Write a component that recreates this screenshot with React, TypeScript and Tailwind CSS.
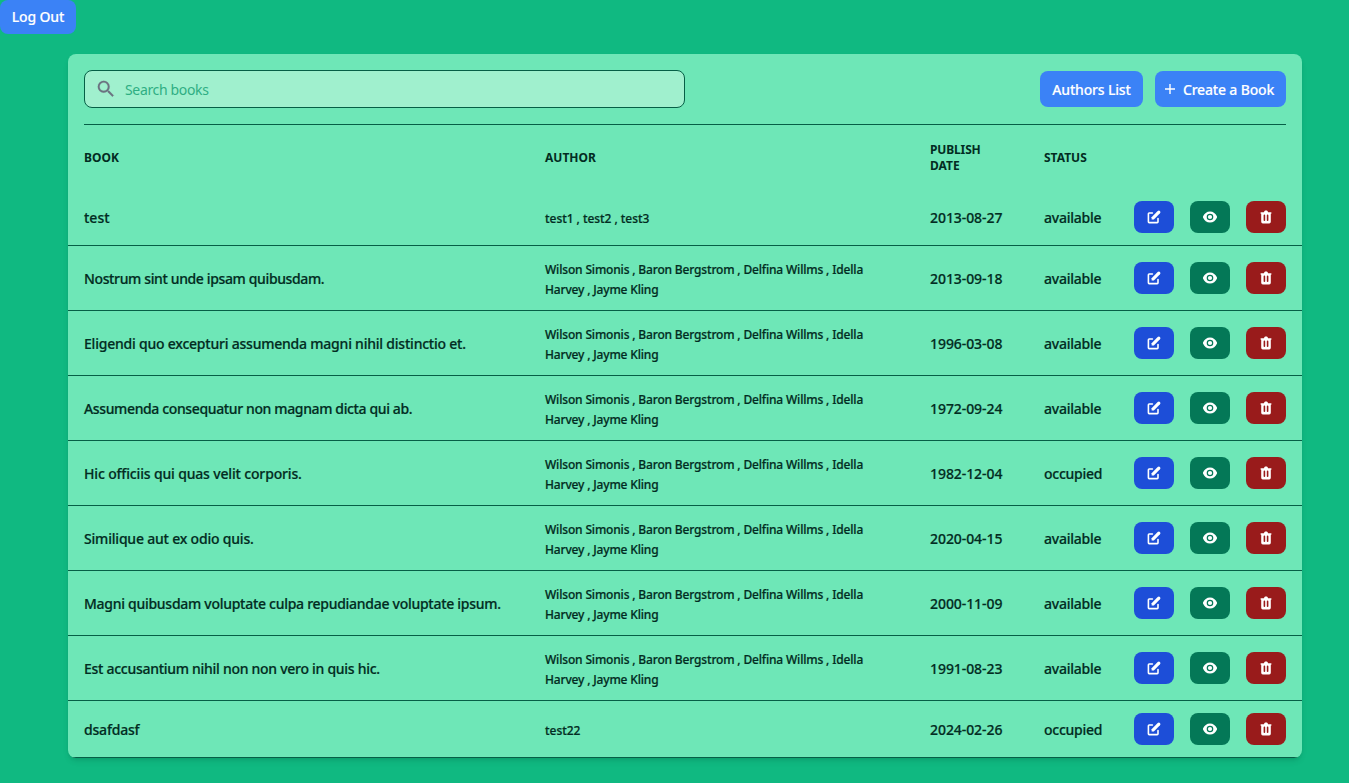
import { MdSearch } from "react-icons/md";
import { HiPencilAlt, HiTrash } from "react-icons/hi";

type Book = { title: string; tracking: string; authors: string; date: string; status: string };

const team = "Wilson Simonis , Baron Bergstrom , Delfina Willms , Idella Harvey , Jayme Kling";

const books: Book[] = [
  { title: "test", tracking: "tracking-normal", authors: "test1 , test2 , test3", date: "2013-08-27", status: "available" },
  { title: "Nostrum sint unde ipsam quibusdam.", tracking: "tracking-[-0.37px]", authors: team, date: "2013-09-18", status: "available" },
  { title: "Eligendi quo excepturi assumenda magni nihil distinctio et.", tracking: "tracking-[-0.22px]", authors: team, date: "1996-03-08", status: "available" },
  { title: "Assumenda consequatur non magnam dicta qui ab.", tracking: "tracking-[-0.37px]", authors: team, date: "1972-09-24", status: "available" },
  { title: "Hic officiis qui quas velit corporis.", tracking: "tracking-[-0.16px]", authors: team, date: "1982-12-04", status: "occupied" },
  { title: "Similique aut ex odio quis.", tracking: "tracking-[-0.2px]", authors: team, date: "2020-04-15", status: "available" },
  { title: "Magni quibusdam voluptate culpa repudiandae voluptate ipsum.", tracking: "tracking-[-0.28px]", authors: team, date: "2000-11-09", status: "available" },
  { title: "Est accusantium nihil non non vero in quis hic.", tracking: "tracking-[-0.28px]", authors: team, date: "1991-08-23", status: "available" },
  { title: "dsafdasf", tracking: "tracking-[-0.2px]", authors: "test22", date: "2024-02-26", status: "occupied" },
];

const columns = "grid grid-cols-[461px_385px_114px_90px_152px] items-center px-4";
const action = "flex h-8 w-10 items-center justify-center rounded-lg text-white";
const primary = "flex h-9 items-center justify-center rounded-lg bg-[#3b82f6] pt-0.5 tracking-[-0.17px] text-white [-webkit-text-stroke:0.15px]";

function EyeIcon() {
  return (
    <svg viewBox="0 0 16 16" className="size-4 fill-current">
      <path
        fillRule="evenodd"
        d="M8 2.5c3.2 0 5.8 2 7 5.1v.8c-1.2 3.1-3.8 5.1-7 5.1s-5.8-2-7-5.1v-.8c1.2-3.1 3.8-5.1 7-5.1zM8 4.7a3.3 3.3 0 1 0 0 6.6 3.3 3.3 0 0 0 0-6.6z"
      />
      <circle cx="8" cy="8" r="2.1" />
    </svg>
  );
}

export default function App() {
  return (
    <div className="min-h-screen bg-[#10b981] font-['Noto_Sans',sans-serif] text-sm font-medium text-[#022c22]">
      <button className="flex h-[34px] w-19 items-center justify-center rounded-lg bg-[#3b82f6] tracking-[-0.15px] text-white [-webkit-text-stroke:0.15px]">Log Out</button>
      <main className="ml-[68px] mt-5 w-[1234px] overflow-hidden rounded-lg bg-[#6ee7b7] shadow-md">
        <div className="mx-4 flex h-[71px] items-center justify-between border-b border-[#065f46]">
          <label className="flex h-[38px] w-[601px] items-center gap-2 rounded-lg border border-[#065f46] bg-[#a0f0ce] pr-3 pl-2.5">
            <MdSearch className="size-[22px] text-[#6b7280] [&>path:last-child]:stroke-[#6b7280] [&>path:last-child]:stroke-[0.2] [&>path:first-child]:stroke-none" />
            <input className="min-w-0 flex-1 pt-0.5 font-normal tracking-[-0.35px] outline-none placeholder:text-[#2fae83]" placeholder="Search books" />
          </label>
          <div className="flex gap-3">
            <button className={`${primary} w-[103px]`}>Authors List</button>
            <button className={`${primary} w-[131px] gap-2 pr-0.5`}>
              <svg viewBox="0 0 10 10" className="mb-0.5 size-2.5 fill-none stroke-white stroke-[1.4]">
                <path d="M5 0v10M0 5h10" />
              </svg>
              Create a Book
            </button>
          </div>
        </div>
        <div className={`${columns} h-16 pt-0.5 text-xs leading-4 font-bold`}>
          <span>BOOK</span>
          <span>AUTHOR</span>
          <span className="w-16"><span className="tracking-[-0.15px]">PUBLISH</span> DATE</span>
          <span>STATUS</span>
        </div>
        {books.map((book) => (
          <div key={book.title} className={`${columns} border-b border-[#065f46] [-webkit-text-stroke:0.2px] ${book.authors === team ? "h-[65px]" : "h-[57px]"}`}>
            <span className={`pt-0.5 ${book.tracking}`}>{book.title}</span>
            <span className={`w-[335px] pt-[3px] text-xs leading-5 ${book.authors === team ? "tracking-[-0.17px]" : "tracking-[-0.05px]"}`}>{book.authors}</span>
            <span className="pt-0.5 tracking-[-0.07px]">{book.date}</span>
            <span className="pt-0.5 tracking-[-0.25px]">{book.status}</span>
            <div className="flex gap-4">
              <button className={`${action} bg-[#1d4ed8]`}><HiPencilAlt className="size-4" /></button>
              <button className={`${action} bg-[#047857]`}><EyeIcon /></button>
              <button className={`${action} bg-[#991b1b]`}><HiTrash className="size-4" /></button>
            </div>
          </div>
        ))}
      </main>
    </div>
  );
}
